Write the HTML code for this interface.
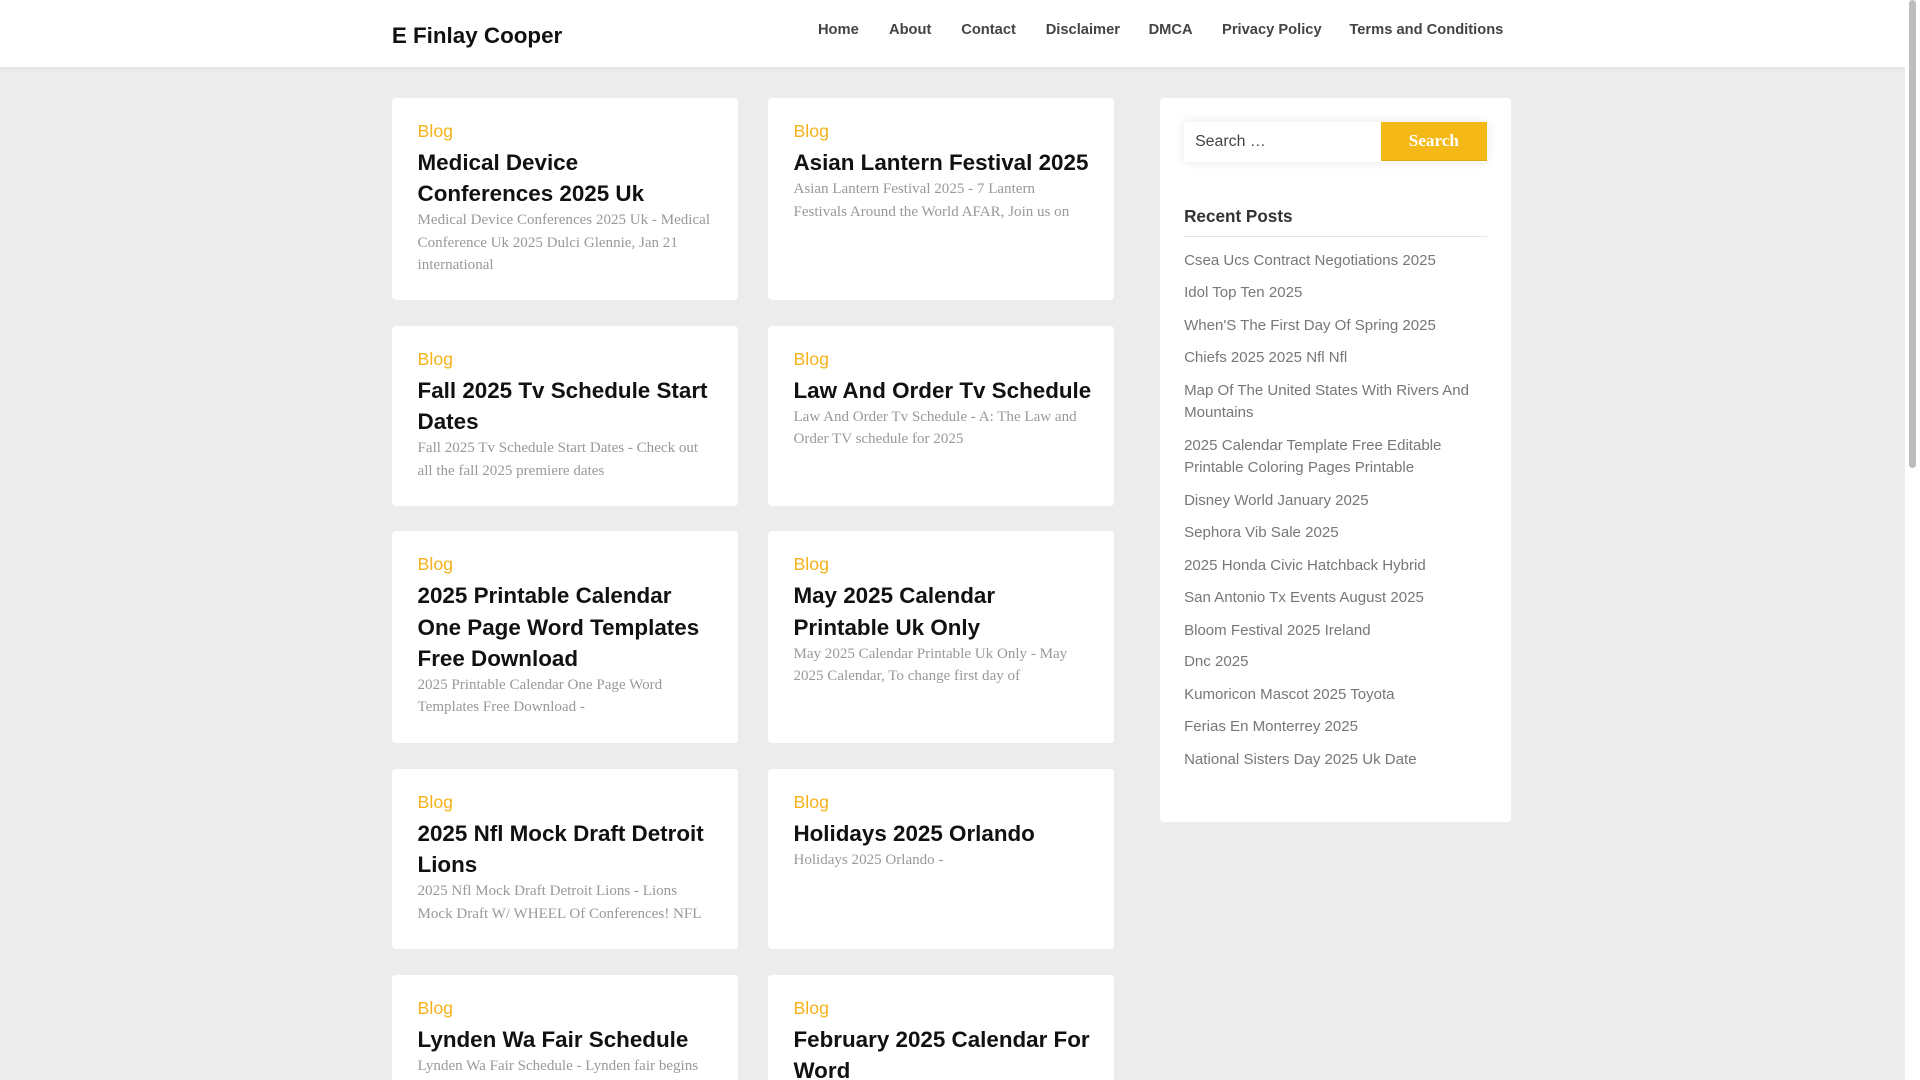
<!DOCTYPE html>
<html><head><meta charset="utf-8"><style>
html,body{margin:0;padding:0}
html{overflow:hidden;height:1080px}
body{width:1568px;height:882px;zoom:1.2244898;background:#ececec;font-family:"Liberation Sans",sans-serif;position:relative;overflow:hidden}
.hdr{position:absolute;left:0;top:0;width:1556px;height:55px;background:#fff;box-shadow:0 1px 4px rgba(0,0,0,.06)}
.logo{position:absolute;left:320px;top:19px;font-size:18.3px;font-weight:bold;color:#111}
.nav{position:absolute;top:18px;font-size:12px;font-weight:bold;color:#444}
.card{position:absolute;width:283px;background:#fff;border-radius:3px;box-sizing:border-box;padding:18px 16px 0 21px;overflow:hidden}
.cat{font-size:14.5px;line-height:18px;color:#f5b21b}
.t{font-size:18.3px;line-height:25.5px;font-weight:bold;color:#111;margin:4px 0 0}
.ex{font-family:"Liberation Serif",serif;font-size:12.3px;line-height:18.3px;color:#999;margin-right:4px}
.side{position:absolute;left:947px;top:80px;width:287px;height:591px;background:#fff;border-radius:3px}
.sb{position:absolute;left:20px;top:20px;width:247px;height:32px;box-shadow:0 0 8px rgba(0,0,0,.1);background:#fff}
.sb span{position:absolute;left:9px;top:9px;font-size:13px;color:#444}
.sb b{position:absolute;right:0;top:0;width:86px;height:31px;border-bottom:1px solid #e0a810;background:#f4b817;color:#fff;font-family:"Liberation Serif",serif;font-size:14px;text-align:center;line-height:31px}
.rp{position:absolute;left:20px;top:88px;width:247px;font-size:14px;font-weight:bold;color:#333;border-bottom:1px solid #e5e5e5;padding-bottom:8px}
.li{position:absolute;left:20px;width:247px;font-size:12.3px;line-height:18px;color:#777}
.scroll{position:absolute;left:1556px;top:0;width:12px;height:882px;background:#fff}
.thumb{position:absolute;left:1559px;top:0;width:6px;height:382px;background:#bdbdbd;border-radius:3px}
</style></head><body>
<div class="hdr"></div>
<div class="logo">E Finlay Cooper</div>
<div class="nav" style="left:668px">Home</div>
<div class="nav" style="left:726px">About</div>
<div class="nav" style="left:785px">Contact</div>
<div class="nav" style="left:854px">Disclaimer</div>
<div class="nav" style="left:938px">DMCA</div>
<div class="nav" style="left:998px">Privacy Policy</div>
<div class="nav" style="left:1102px">Terms and Conditions</div>

<div class="card" style="left:320px;top:80px;height:165px"><div class="cat">Blog</div><div class="t">Medical Device Conferences 2025 Uk</div><div class="ex">Medical Device Conferences 2025 Uk - Medical Conference Uk 2025 Dulci Glennie, Jan 21 international</div></div>
<div class="card" style="left:627px;top:80px;height:165px"><div class="cat">Blog</div><div class="t" style="white-space:nowrap">Asian Lantern Festival 2025</div><div class="ex">Asian Lantern Festival 2025 - 7 Lantern Festivals Around the World AFAR, Join us on</div></div>

<div class="card" style="left:320px;top:266px;height:147px"><div class="cat">Blog</div><div class="t">Fall 2025 Tv Schedule Start Dates</div><div class="ex">Fall 2025 Tv Schedule Start Dates - Check out all the fall 2025 premiere dates</div></div>
<div class="card" style="left:627px;top:266px;height:147px"><div class="cat">Blog</div><div class="t" style="white-space:nowrap">Law And Order Tv Schedule</div><div class="ex">Law And Order Tv Schedule - A: The Law and Order TV schedule for 2025</div></div>

<div class="card" style="left:320px;top:434px;height:173px"><div class="cat">Blog</div><div class="t">2025 Printable Calendar<br>One Page Word Templates Free Download</div><div class="ex">2025 Printable Calendar One Page Word Templates Free Download -</div></div>
<div class="card" style="left:627px;top:434px;height:173px"><div class="cat">Blog</div><div class="t">May 2025 Calendar Printable Uk Only</div><div class="ex">May 2025 Calendar Printable Uk Only - May 2025 Calendar, To change first day of</div></div>

<div class="card" style="left:320px;top:628px;height:147px"><div class="cat">Blog</div><div class="t">2025 Nfl Mock Draft Detroit Lions</div><div class="ex">2025 Nfl Mock Draft Detroit Lions - Lions Mock Draft W/ WHEEL Of Conferences! NFL</div></div>
<div class="card" style="left:627px;top:628px;height:147px"><div class="cat">Blog</div><div class="t">Holidays 2025 Orlando</div><div class="ex">Holidays 2025 Orlando -</div></div>

<div class="card" style="left:320px;top:796px;height:120px"><div class="cat">Blog</div><div class="t">Lynden Wa Fair Schedule</div><div class="ex">Lynden Wa Fair Schedule - Lynden fair begins</div></div>
<div class="card" style="left:627px;top:796px;height:120px"><div class="cat">Blog</div><div class="t">February 2025 Calendar For<br>Word</div></div>

<div class="side">
<div class="sb"><span>Search …</span><b>Search</b></div>
<div class="rp">Recent Posts</div>
<div class="li" style="top:124px">Csea Ucs Contract Negotiations 2025</div>
<div class="li" style="top:150px">Idol Top Ten 2025</div>
<div class="li" style="top:177px">When'S The First Day Of Spring 2025</div>
<div class="li" style="top:203px">Chiefs 2025 2025 Nfl Nfl</div>
<div class="li" style="top:230px">Map Of The United States With Rivers And Mountains</div>
<div class="li" style="top:275px">2025 Calendar Template Free Editable Printable Coloring Pages Printable</div>
<div class="li" style="top:320px">Disney World January 2025</div>
<div class="li" style="top:346px">Sephora Vib Sale 2025</div>
<div class="li" style="top:373px">2025 Honda Civic Hatchback Hybrid</div>
<div class="li" style="top:399px">San Antonio Tx Events August 2025</div>
<div class="li" style="top:426px">Bloom Festival 2025 Ireland</div>
<div class="li" style="top:452px">Dnc 2025</div>
<div class="li" style="top:479px">Kumoricon Mascot 2025 Toyota</div>
<div class="li" style="top:505px">Ferias En Monterrey 2025</div>
<div class="li" style="top:532px">National Sisters Day 2025 Uk Date</div>
</div>
<div class="scroll"></div><div class="thumb"></div>
</body></html>
